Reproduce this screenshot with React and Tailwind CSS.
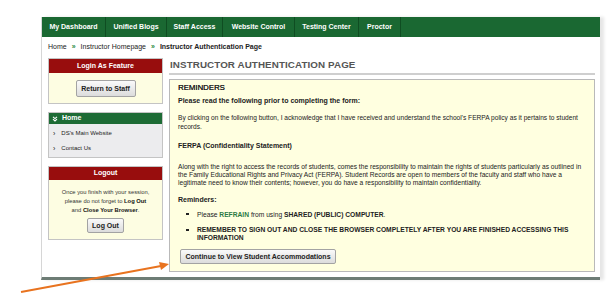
import React from 'react';

const font = { fontFamily: '"Liberation Sans", Arial, sans-serif' };

const navItems = [
  { label: 'My Dashboard', w: 'w-[64px]' },
  { label: 'Unified Blogs', w: 'w-[61px]' },
  { label: 'Staff Access', w: 'w-[56px]' },
  { label: 'Website Control', w: 'w-[72px]' },
  { label: 'Testing Center', w: 'w-[64px]' },
  { label: 'Proctor', w: 'w-[42px]' },
];

const Btn = ({ children, className = '' }) => (
  <button
    className={`border border-[#a3a3a3] rounded-[2px] bg-gradient-to-b from-[#fafafa] to-[#dcdcdc] font-bold text-[#222] leading-none ${className}`}
  >
    {children}
  </button>
);

const Bullet = () => (
  <span className="w-[19px] shrink-0 flex items-start pl-[8px] pt-[3px]">
    <span className="block w-[2.5px] h-[2.5px] bg-[#222]" />
  </span>
);

const App = () => {
  return (
    <div className="relative w-[615px] h-[301px] bg-white overflow-hidden" style={font}>
      {/* page container */}
      <div className="ml-[41px] mt-[17px] w-[559px] h-[263px] flex flex-col bg-white border-l border-[#d6d6d6] border-b-[3px] border-b-[#6d7c75] shadow-[4px_0_3px_#e6e6e6]">
        {/* Top nav */}
        <div className="h-[20px] bg-[#1a6832] flex">
          {navItems.map(item => (
            <div
              key={item.label}
              className={`${item.w} h-full flex items-center justify-center border-r border-[#0f4d22] text-white font-bold text-[7px]`}
            >
              {item.label}
            </div>
          ))}
        </div>

        {/* Breadcrumb */}
        <div className="h-[21px] flex items-center pl-[6px] text-[7px] text-[#222]">
          <span>Home</span>
          <span className="mx-[5px] text-[#2a8a3e] font-bold">»</span>
          <span>Instructor Homepage</span>
          <span className="mx-[5px] text-[#2a8a3e] font-bold">»</span>
          <span className="font-bold">Instructor Authentication Page</span>
        </div>

        {/* Body */}
        <div className="flex pl-[6px] pr-[5px] gap-[6px] flex-1">
          {/* Sidebar */}
          <div className="w-[115px] flex flex-col">
            <div className="border border-[#c4c4c4]">
              <div className="h-[14px] bg-[#980d0d] text-white font-bold text-[7px] flex items-center justify-center">
                Login As Feature
              </div>
              <div className="h-[30px] bg-[#fdfde2] flex items-center justify-center">
                <Btn className="w-[60px] h-[17px] text-[7px]">Return to Staff</Btn>
              </div>
            </div>

            <div className="mt-[8px] border border-[#c4c4c4]">
              <div className="h-[11px] bg-[#1d6b35] text-white font-bold text-[7px] flex items-center pl-[3px] gap-[4px]">
                <svg width="6" height="6" viewBox="0 0 6 6" fill="none" stroke="white" strokeWidth="1.1">
                  <path d="M1 0.8 L3 2.6 L5 0.8 M1 3.2 L3 5 L5 3.2" />
                </svg>
                <span>Home</span>
              </div>
              <div className="bg-[#ececee] text-[6px] text-[#222] pt-[5px] pb-[4px] flex flex-col gap-[6px]">
                <div className="flex items-center pl-[4px] gap-[6px]">
                  <span className="text-[7px] leading-none">›</span>
                  <span>DS's Main Website</span>
                </div>
                <div className="flex items-center pl-[4px] gap-[6px]">
                  <span className="text-[7px] leading-none">›</span>
                  <span>Contact Us</span>
                </div>
              </div>
            </div>

            <div className="mt-[8px] border border-[#c4c4c4]">
              <div className="h-[13px] bg-[#980d0d] text-white font-bold text-[7px] flex items-center justify-center">
                Logout
              </div>
              <div className="bg-[#fdfde2] text-[5.8px] text-[#333] leading-[9px] text-center pt-[8px] pb-[6px] flex flex-col items-center">
                <div>Once you finish with your session,</div>
                <div>
                  please do not forget to <b className="text-[#111]">Log Out</b>
                </div>
                <div>
                  and <b className="text-[#111]">Close Your Browser</b>.
                </div>
                <Btn className="mt-[3px] w-[37px] h-[15px] text-[7px]">Log Out</Btn>
              </div>
            </div>
          </div>

          {/* Main content */}
          <div className="flex-1 flex flex-col">
            <div className="h-[17px] border-b-2 border-[#cfcfcf] flex items-center pl-[1px] pb-[1px]">
              <span className="text-[#555] font-bold text-[9.8px] tracking-[0.1px]">
                INSTRUCTOR AUTHENTICATION PAGE
              </span>
            </div>

            <div className="mt-[4px] border border-[#b9b9b9] bg-[#ffffe0] pl-[8px] pr-[6px] pt-[3px] pb-[5px] text-[#222]">
              <div className="text-[7.8px] leading-[10px] text-[#1a1a1a] [text-shadow:0.2px_0_0_#1a1a1a]">REMINDERS</div>
              <div className="mt-[2.5px] font-bold text-[7px] leading-[9px]">
                Please read the following prior to completing the form:
              </div>
              <div className="mt-[8px] text-[6.6px] leading-[9px] whitespace-nowrap">
                By clicking on the following button, I acknowledge that I have received and understand the school's FERPA policy as it pertains to student
                <br />
                records.
              </div>
              <div className="mt-[10px] font-bold text-[7px] leading-[9px]">
                FERPA (Confidentiality Statement)
              </div>
              <div className="mt-[13.5px] text-[6.65px] leading-[8px] whitespace-nowrap">
                Along with the right to access the records of students, comes the responsibility to maintain the rights of students particularly as outlined in
                <br />
                the Family Educational Rights and Privacy Act (FERPA). Student Records are open to members of the faculty and staff who have a
                <br />
                legitimate need to know their contents; however, you do have a responsibility to maintain confidentiality.
              </div>
              <div className="mt-[7.5px] font-bold text-[7px] leading-[9px]">Reminders:</div>
              <ul className="mt-[6px] flex flex-col gap-[7px] text-[6.7px]">
                <li className="flex leading-[9px]">
                  <Bullet />
                  <span>
                    Please <b className="text-[#2b7a43]">REFRAIN</b> from using <b>SHARED (PUBLIC) COMPUTER</b>.
                  </span>
                </li>
                <li className="flex leading-[8px] font-bold">
                  <Bullet />
                  <span className="whitespace-nowrap">
                    REMEMBER TO SIGN OUT AND CLOSE THE BROWSER COMPLETELY AFTER YOU ARE FINISHED ACCESSING THIS
                    <br />
                    INFORMATION
                  </span>
                </li>
              </ul>
              <Btn className="mt-[5.5px] w-[156px] h-[15px] text-[7px] ml-[2px]">
                Continue to View Student Accommodations
              </Btn>
            </div>
          </div>
        </div>
      </div>

      {/* annotation arrow */}
      <svg className="absolute left-0 top-0 pointer-events-none" width="615" height="301">
        <line x1="21" y1="292" x2="161" y2="266" stroke="#e8731f" strokeWidth="2" />
        <polygon points="169,264 159,262 161,270" fill="#e8731f" />
      </svg>
    </div>
  );
};

export default App;
